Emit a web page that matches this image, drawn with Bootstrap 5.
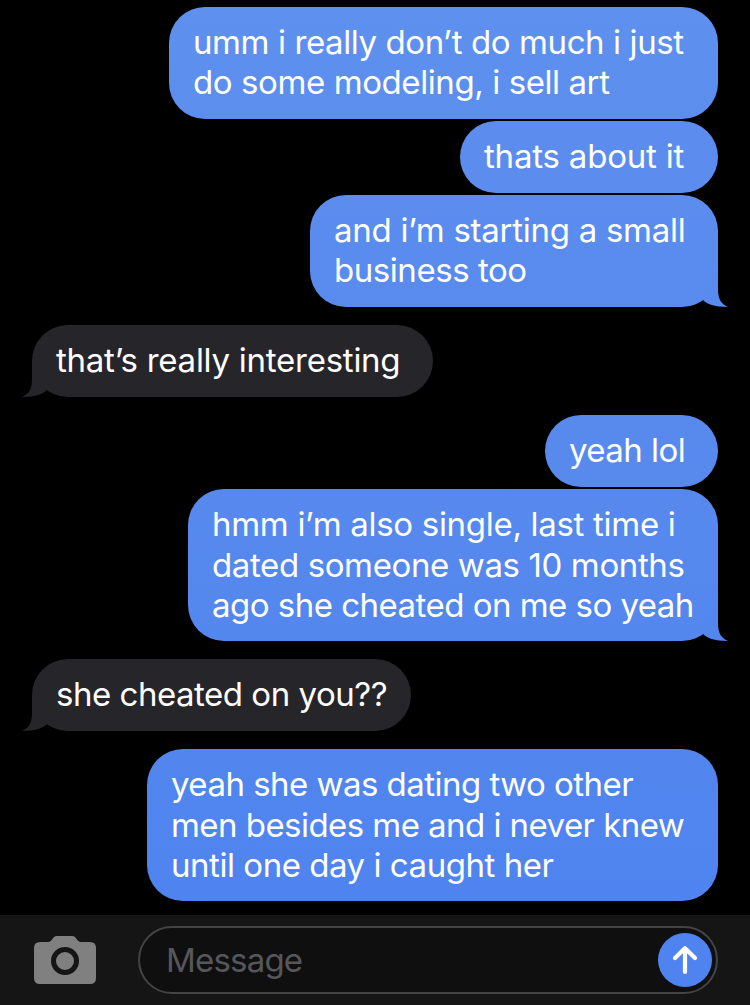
<!DOCTYPE html>
<html lang="en">
<head>
<meta charset="utf-8">
<meta name="viewport" content="width=device-width, initial-scale=1">
<title>Messages</title>
<link rel="stylesheet" href="https://cdn.jsdelivr.net/npm/bootstrap@5.3.0/dist/css/bootstrap.min.css">
<style>
body{background:#000;color:#fff;font-family:Inter,"Liberation Sans",sans-serif;font-size:33px;line-height:40.3px}
.thread{padding:7px 32px 14px;gap:2px}
.bubble{border-radius:36px;padding:15px 0 0 24px;height:72px;white-space:nowrap;letter-spacing:-.4px}
.two{height:112px}
.three{height:152px;line-height:40.5px}
.turn{margin-top:16px}
.sent{background:#588aed}
.b1{background:linear-gradient(#5e90ee,#5c8eee)}
.b2{background:#5c8dee}
.b3{background:linear-gradient(#5b8cee,#598bee)}
.b5{background:#588aed}
.b6{background:linear-gradient(#5789ed,#5487ee)}
.b8{background:linear-gradient(#5286ee,#4f83ef)}
.received{background:#26252a}
.tail{position:absolute;bottom:0;width:36px;height:36px}
.sent .tail{right:-10px}
.received .tail{left:-10px;transform:scaleX(-1)}
.bar{background:#151515;height:90px;padding:11px 32px 11px 34px}
.field{width:580px;height:68px;border:2px solid #444446;background:#0f0f10;color:#57575b;padding:0 4px 0 26px;letter-spacing:-.8px}
.send{width:54px;height:54px;background:#4f83ef}
</style>
</head>
<body class="overflow-hidden">
<main class="thread d-flex flex-column">
  <div class="bubble sent two b1 align-self-end" style="width:549px"><div style="letter-spacing:-.41px">umm i really don’t do much i just</div><div style="letter-spacing:-.41px">do some modeling, i sell art</div></div>
  <div class="bubble sent b2 align-self-end" style="width:258px"><div style="letter-spacing:-.2px">thats about it</div></div>
  <div class="bubble sent two b3 align-self-end position-relative" style="width:408px"><div style="letter-spacing:-.27px">and i’m starting a small</div><div style="letter-spacing:-.45px">business too</div>
    <svg class="tail" viewBox="0 0 36 36" fill="#598bee"><path d="M22 0H26V18C26 28 29 33 36 36C22 35.800 15 33 11 29L20 16Z"/></svg></div>
  <div class="bubble received turn align-self-start position-relative" style="width:401px"><div style="letter-spacing:-.25px">that’s really interesting</div>
    <svg class="tail" viewBox="0 0 36 36" fill="#26252a"><path d="M22 0H26V18C26 28 29 33 36 36C22 35.800 15 33 11 29L20 16Z"/></svg></div>
  <div class="bubble sent b5 turn align-self-end" style="width:173px"><div style="letter-spacing:-.55px">yeah lol</div></div>
  <div class="bubble sent three b6 align-self-end position-relative" style="width:530px"><div style="letter-spacing:-.3px">hmm i’m also single, last time i</div><div style="letter-spacing:-.38px">dated someone was 10 months</div><div style="letter-spacing:-.52px">ago she cheated on me so yeah</div>
    <svg class="tail" viewBox="0 0 36 36" fill="#5487ee"><path d="M22 0H26V18C26 28 29 33 36 36C22 35.800 15 33 11 29L20 16Z"/></svg></div>
  <div class="bubble received turn align-self-start position-relative" style="width:379px"><div style="letter-spacing:-.48px">she cheated on you??</div>
    <svg class="tail" viewBox="0 0 36 36" fill="#26252a"><path d="M22 0H26V18C26 28 29 33 36 36C22 35.800 15 33 11 29L20 16Z"/></svg></div>
  <div class="bubble sent three b8 turn align-self-end" style="width:571px"><div style="letter-spacing:-.53px">yeah she was dating two other</div><div style="letter-spacing:-.55px">men besides me and i never knew</div><div style="letter-spacing:-.46px">until one day i caught her</div></div>
</main>
<footer class="bar d-flex align-items-center justify-content-between">
  <svg width="62" height="48" viewBox="0 0 62 48" role="img" aria-label="Camera"><path fill="#808080" d="M6 6H14C16 6 17 5 18 3.500C19.500 1 21 0 23 0H38C40 0 41.500 1 43 3.500C44 5 45 6 47 6H56Q62 6 62 12V42Q62 48 56 48H6Q0 48 0 42V12Q0 6 6 6Z"/><circle cx="31" cy="25" r="11.500" fill="#808080" stroke="#151515" stroke-width="5"/></svg>
  <div class="field rounded-pill d-flex align-items-center justify-content-between"><span>Message</span>
    <div class="send rounded-circle d-flex align-items-center justify-content-center"><svg width="54" height="54" viewBox="0 0 54 54" fill="none" stroke="#fff" stroke-width="4.200" stroke-linecap="round" stroke-linejoin="round" role="img" aria-label="Send"><path d="M27 39V15.500M17 25L27 15.200L37 25"/></svg></div>
  </div>
</footer>
<script src="https://cdn.jsdelivr.net/npm/bootstrap@5.3.0/dist/js/bootstrap.bundle.min.js"></script>
</body>
</html>
